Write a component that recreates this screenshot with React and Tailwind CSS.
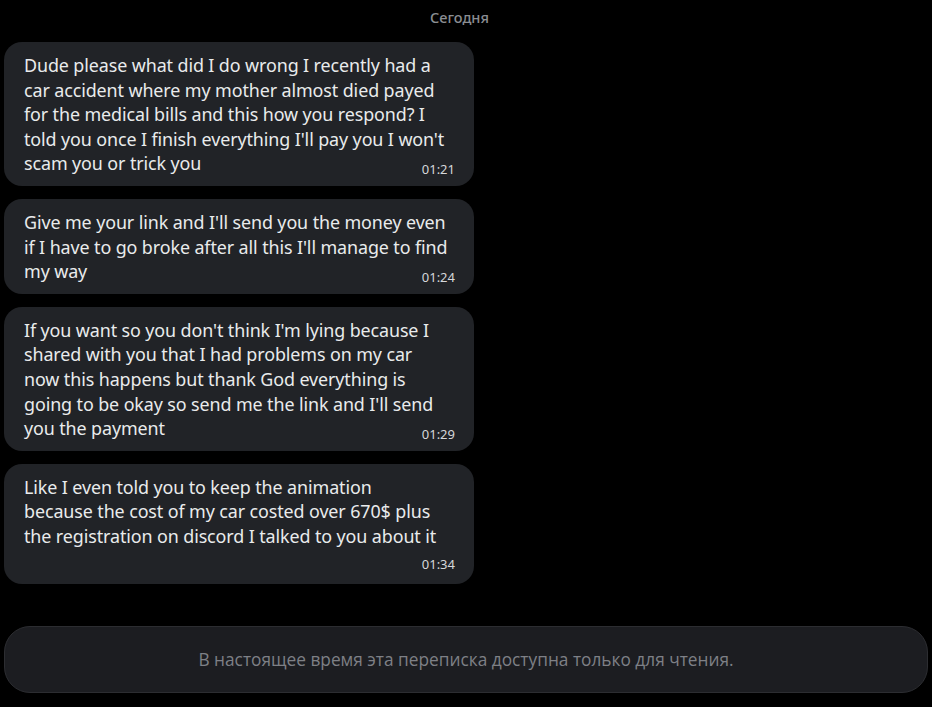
import React from "react";

const messages = [
  {
    lines: [
      "Dude please what did I do wrong I recently had a",
      "car accident where my mother almost died payed",
      "for the medical bills and this how you respond? I",
      "told you once I finish everything I'll pay you I won't",
      "scam you or trick you",
    ],
    time: "01:21",
  },
  {
    lines: [
      "Give me your link and I'll send you the money even",
      "if I have to go broke after all this I'll manage to find",
      "my way",
    ],
    time: "01:24",
  },
  {
    lines: [
      "If you want so you don't think I'm lying because I",
      "shared with you that I had problems on my car",
      "now this happens but thank God everything is",
      "going to be okay so send me the link and I'll send",
      "you the payment",
    ],
    time: "01:29",
  },
  {
    lines: [
      "Like I even told you to keep the animation",
      "because the cost of my car costed over 670$ plus",
      "the registration on discord I talked to you about it",
    ],
    time: "01:34",
    own: true,
  },
];

function Bubble({ m }) {
  const last = m.lines[m.lines.length - 1];
  const rest = m.lines.slice(0, -1);
  return (
    <div className="w-[470px] rounded-[18px] bg-[#212327] pl-5 pr-[19px] pt-[11px] pb-[10px] text-[#e9ebec] text-[17.9px] leading-[24.6px] whitespace-nowrap tracking-[-0.1px]">
      {rest.map((l, i) => (
        <div key={i}>{l}</div>
      ))}
      {m.own ? (
        <>
          <div>{last}</div>
          <div className="flex justify-end pt-[5px]">
            <span className="text-[13px] leading-[20px] tracking-normal text-[#d5d7da]">{m.time}</span>
          </div>
        </>
      ) : (
        <div className="flex justify-between items-end">
          <span>{last}</span>
          <span className="text-[13px] leading-[20px] tracking-normal text-[#d5d7da] translate-y-[3px]">{m.time}</span>
        </div>
      )}
    </div>
  );
}

export default function App() {
  return (
    <div
      className="w-[932px] h-[707px] bg-black overflow-hidden flex flex-col"
      style={{ fontFamily: '"Segoe UI", "Noto Sans", sans-serif' }}
    >
      <div className="h-[34px] flex items-center justify-center pr-[13px] pt-[1px]">
        <span className="text-[14.5px] font-medium text-[#8a8d92]">Сегодня</span>
      </div>
      <div className="flex flex-col gap-[13px] pl-1 pt-2">
        {messages.map((m, i) => (
          <Bubble key={i} m={m} />
        ))}
      </div>
      <div className="flex-1" />
      <div className="mx-1 mb-[14px] h-[67px] rounded-[26px] bg-[#1c1d21] border border-[#2c2d31] flex items-center justify-center">
        <span
          className="text-[17.3px] text-[#7e8086]"
          style={{ fontFamily: '"Open Sans", sans-serif' }}
        >
          В настоящее время эта переписка доступна только для чтения.
        </span>
      </div>
    </div>
  );
}
